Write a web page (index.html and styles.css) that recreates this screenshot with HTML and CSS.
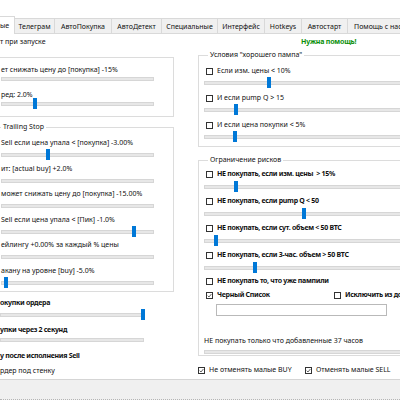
FILE: index.html
```html
<!DOCTYPE html>
<html lang="ru">
<head>
  <meta charset="UTF-8">
  <title>Настройки бота</title>
  <link rel="stylesheet" href="styles.css">
</head>
<body>
<div class="window">
  <div class="topbar"></div>

  <div class="tabs">
    <div class="tab active w-main">ые</div>
    <div class="tab w-tg">Телеграм</div>
    <div class="tab w-buy">АвтоПокупка</div>
    <div class="tab w-det">АвтоДетект</div>
    <div class="tab w-spec">Специальные</div>
    <div class="tab w-ui">Интерфейс</div>
    <div class="tab w-hk">Hotkeys</div>
    <div class="tab w-as">Автостарт</div>
    <div class="tab w-help">Помощь с настройкой</div>
  </div>

  <div class="page">
    <!-- левая колонка -->
    <div class="col-left">
      <div class="lbl top-row">т при запуске</div>

      <div class="group g1">
        <div class="lbl">ет снижать цену до [покупка] -15%</div>
        <div class="slider tight"></div>
        <div class="lbl next">ред: 2.0%</div>
        <div class="slider tight"><span class="thumb" style="left:31px"></span></div>
      </div>

      <fieldset class="group g2">
        <legend>Trailing Stop</legend>
        <div class="gbody">
          <div class="lbl">Sell если цена упала &lt; [покупка] -3.00%</div>
          <div class="slider"><span class="thumb" style="left:44px"></span></div>
          <div class="lbl row">ит: [actual buy] +2.0%</div>
          <div class="slider"></div>
          <div class="lbl row">может снижать цену до [покупка] -15.00%</div>
          <div class="slider"></div>
          <div class="lbl row">Sell если цена упала &lt; [Пик] -1.0%</div>
          <div class="slider"><span class="thumb" style="left:130px"></span></div>
          <div class="lbl row">ейлингу +0.00% за каждый % цены</div>
          <div class="slider"></div>
          <div class="lbl row">акану на уровне [buy] -5.0%</div>
          <div class="slider"><span class="thumb" style="left:2px"></span></div>
        </div>
      </fieldset>

      <div class="lbl b after-g2">окупки ордера</div>
      <div class="slider short"><span class="thumb" style="left:140px"></span></div>
      <div class="lbl b gap3">упки через 2 секунд</div>
      <div class="slider short up2"></div>
      <div class="lbl b gap4">у после исполнения Sell</div>
      <div class="lbl gap3">рдер под стенку</div>
    </div>

    <!-- правая колонка -->
    <div class="col-right">
      <div class="lbl top-row help">Нужна помощь!</div>

      <fieldset class="group ga">
        <legend>Условия "хорошего пампа"</legend>
        <div class="gbody">
          <label class="cb"><span class="box"></span>Если изм. цены &lt; 10%</label>
          <div class="slider"><span class="thumb" style="left:62px"></span></div>
          <label class="cb row3"><span class="box"></span>И если pump Q &gt; 15</label>
          <div class="slider"><span class="thumb" style="left:29px"></span></div>
          <label class="cb row3"><span class="box"></span>И если цена покупки &lt; 5%</label>
          <div class="slider"><span class="thumb" style="left:28px"></span></div>
        </div>
      </fieldset>

      <fieldset class="group gb">
        <legend>Ограничение рисков</legend>
        <div class="gbody">
          <label class="cb b"><span class="box"></span>НЕ покупать, если изм. цены &nbsp;&gt; 15%</label>
          <div class="slider s1"><span class="thumb" style="left:29px"></span></div>
          <label class="cb b row2"><span class="box"></span>НЕ покупать, если pump Q &lt; 50</label>
          <div class="slider s1"><span class="thumb" style="left:97px"></span></div>
          <label class="cb b row2"><span class="box"></span>НЕ покупать, если сут. объем &lt; 50 BTC</label>
          <div class="slider s1"><span class="thumb" style="left:9px"></span></div>
          <label class="cb b row2"><span class="box"></span>НЕ покупать, если 3-час. объем &gt; 50 BTC</label>
          <div class="slider s1"><span class="thumb" style="left:48px"></span></div>
          <label class="cb b row1"><span class="box"></span>НЕ покупать то, что уже пампили</label>
          <div class="pair row2">
            <label class="cb b black"><span class="box"><svg viewBox="0 0 6 6"><polyline points="0.8,3.2 2.4,4.8 5.3,1.2"/></svg></span>Черный Список</label>
            <label class="cb b excl"><span class="box"></span>Исключить из доверенных</label>
          </div>
          <div class="textbox"></div>
          <div class="lbl hours">НЕ покупать только что добавленные 37 часов</div>
          <div class="slider last"></div>
        </div>
      </fieldset>

      <div class="pair bottom">
        <label class="cb buy"><span class="box"><svg viewBox="0 0 6 6"><polyline points="0.8,3.2 2.4,4.8 5.3,1.2"/></svg></span>Не отменять малые BUY</label>
        <label class="cb"><span class="box"><svg viewBox="0 0 6 6"><polyline points="0.8,3.2 2.4,4.8 5.3,1.2"/></svg></span>Отменять малые SELL</label>
      </div>
    </div>
  </div>

  <div class="status"></div>
</div>
</body>
</html>
```

FILE: styles.css
```css
* {
  box-sizing: border-box;
}

body {
  margin: 0;
  background: #fff;
  color: #111;
  font-family: "Noto Sans", "Liberation Sans", sans-serif;
  font-size: 7px;
}

.window {
  width: 400px;
  height: 400px;
  overflow: hidden;
  display: flex;
  flex-direction: column;
}

.topbar {
  height: 17px;
  flex: none;
}

/* tabs */
.tabs {
  display: flex;
  align-items: flex-end;
  height: 17px;
  flex: none;
  border-bottom: 1px solid #d9d9d9;
}

.tab {
  flex: none;
  height: 16px;
  line-height: 15px;
  margin-left: -1px;
  margin-bottom: -1px;
  border: 1px solid #d9d9d9;
  background: #f0f0f0;
  text-align: center;
  white-space: nowrap;
  overflow: hidden;
}

.tab.active {
  height: 18px;
  line-height: 17px;
  background: #fff;
  border-bottom-color: #fff;
  text-align: right;
  padding-right: 5px;
}

.w-main { width: 16px; }
.w-tg { width: 41px; }
.w-buy { width: 58px; }
.w-det { width: 51px; }
.w-spec { width: 57px; }
.w-ui { width: 48px; }
.w-hk { width: 38px; }
.w-as { width: 47px; }
.w-help { width: 90px; text-align: left; padding-left: 6px; }

/* page */
.page {
  flex: none;
  height: 345px;
  display: flex;
  gap: 24px;
  overflow: hidden;
}

.col-left,
.col-right,
.gbody,
.g1 {
  display: flex;
  flex-direction: column;
}

.col-left > *,
.col-right > *,
.gbody > *,
.g1 > * {
  flex: none;
}

.col-left {
  flex: none;
  width: 174px;
}

.col-right {
  flex: none;
  width: 240px;
}

.lbl {
  height: 12px;
  line-height: 12px;
  white-space: nowrap;
}

.b {
  font-weight: bold;
  letter-spacing: -0.3px;
}

.top-row {
  margin-top: 2px;
}

.help {
  padding-left: 103px;
  color: #0a8f0a;
  font-weight: bold;
  letter-spacing: -0.2px;
}

/* group boxes */
.group {
  margin: 0;
  min-width: 0;
  border: 1px solid #dcdcdc;
}

.group legend {
  padding: 0 2px;
  height: 12px;
  line-height: 12px;
  white-space: nowrap;
}

.g1 {
  margin-top: 9px;
  margin-left: -10px;
  width: 184px;
  padding: 6px 0 6px 10px;
}

.g1 .next {
  margin-top: 4px;
}

.g2 {
  margin-top: 4px;
  margin-left: -20px;
  width: 194px;
  padding: 4px 0 2px 20px;
}

.g2 .row {
  margin-top: 1.6px;
}

.after-g2 { margin-top: 5px; }
.gap3 { margin-top: 3px; }
.gap4 { margin-top: 4px; }

.ga {
  margin-top: 1px;
  padding: 4px 0 3px 5px;
}

.ga legend,
.gb legend {
  margin-left: 4px;
}

.ga .row3 { margin-top: 3px; }

.gb {
  margin-top: 7px;
  padding: 2px 0 1px 5px;
}

.gb .s1 { margin-top: 5px; }
.gb .row2 { margin-top: 2px; }
.gb .row1 { margin-top: 1px; }

/* sliders */
.slider {
  position: relative;
  height: 4px;
  margin: 4px 0;
  background: #e7e7e7;
  border: 1px solid #d6d6d6;
}

.col-left .slider {
  width: 153px;
}

.col-left .slider.short {
  width: 144px;
}

.slider.tight {
  margin-top: 1px;
}

.slider.up2 {
  margin-top: 2px;
}

.slider.last {
  margin-top: 3px;
  margin-bottom: 0;
}

.thumb {
  position: absolute;
  top: -5px;
  width: 4px;
  height: 11px;
  background: #0078d7;
}

/* checkboxes */
.cb {
  display: flex;
  align-items: center;
  gap: 4px;
  height: 12px;
  line-height: 12px;
  padding-left: 2px;
  white-space: nowrap;
}

.box {
  flex: none;
  width: 7px;
  height: 7px;
  border: 1px solid #333;
  background: #fff;
  display: flex;
}

.box svg {
  width: 5px;
  height: 5px;
  fill: none;
  stroke: #333;
  stroke-width: 0.9;
}

.pair {
  display: flex;
}

.black {
  width: 130px;
}

.excl {
  padding-left: 0;
}

.textbox {
  margin: 3px 0 0 12px;
  width: 171px;
  height: 12px;
  border: 1px solid #b9b9b9;
  background: #fff;
}

.hours {
  margin-top: 19px;
}

.bottom {
  margin-top: 8px;
}

.bottom .cb {
  padding-left: 0;
}

.buy {
  width: 107px;
}

/* status bar */
.status {
  flex: none;
  height: 21px;
  background: #f0f0f0;
  border-top: 1px solid #d5d5d5;
  border-bottom: 1px dotted #b5b5b5;
}
```
